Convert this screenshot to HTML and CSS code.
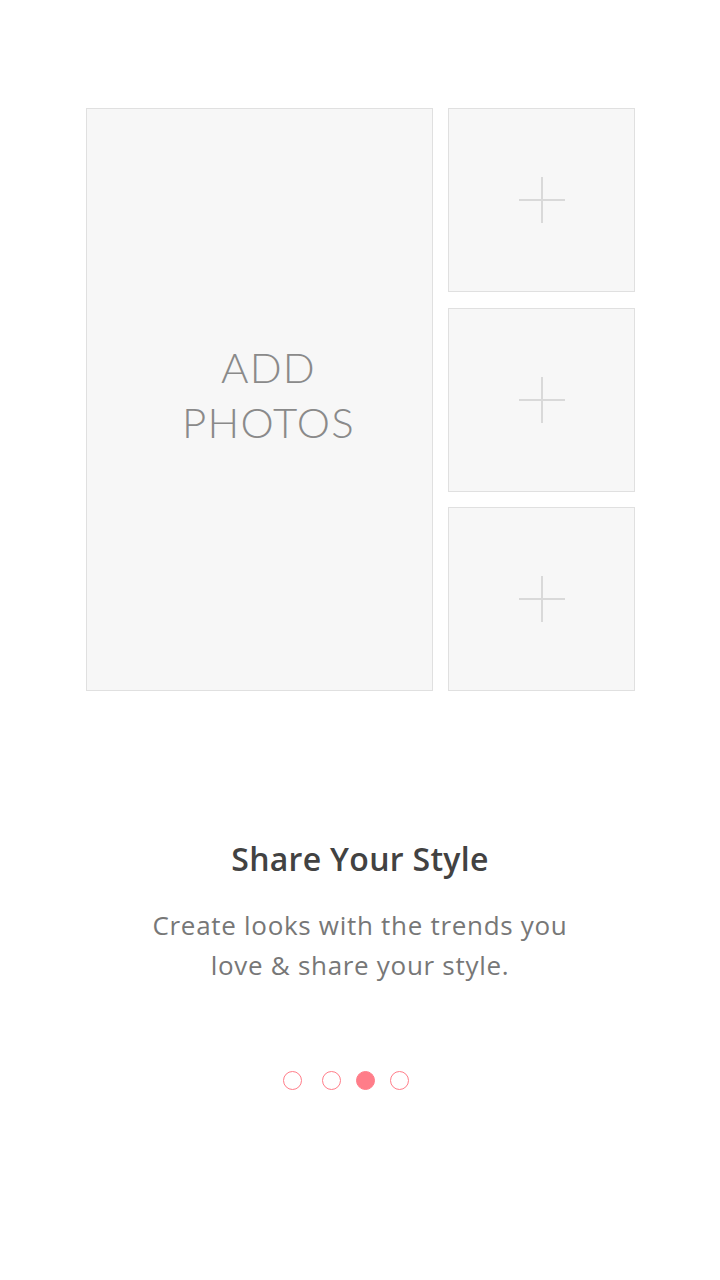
FILE: index.html
```html
<!DOCTYPE html>
<html lang="en">
<head>
<meta charset="utf-8">
<title>Share Your Style</title>
<link rel="stylesheet" href="styles.css">
</head>
<body>
<main class="screen">
  <section class="grid">
    <div class="tile tile-main">
      <span class="add-label">ADD<br>PHOTOS</span>
    </div>
    <div class="tile tile-small">
      <svg class="plus" viewBox="0 0 46 46" width="46" height="46"><path d="M23 0V46M0 23H46" stroke="#d9d9d9" stroke-width="2" fill="none"/></svg>
    </div>
    <div class="tile tile-small">
      <svg class="plus" viewBox="0 0 46 46" width="46" height="46"><path d="M23 0V46M0 23H46" stroke="#d9d9d9" stroke-width="2" fill="none"/></svg>
    </div>
    <div class="tile tile-small">
      <svg class="plus" viewBox="0 0 46 46" width="46" height="46"><path d="M23 0V46M0 23H46" stroke="#d9d9d9" stroke-width="2" fill="none"/></svg>
    </div>
  </section>
  <section class="intro">
    <h1 class="title">Share Your Style</h1>
    <p class="desc">Create looks with the trends you<br>love &amp; share your style.</p>
  </section>
  <nav class="dots">
    <span class="dot dot-first"></span>
    <span class="dot"></span>
    <span class="dot dot-active"></span>
    <span class="dot"></span>
  </nav>
</main>
</body>
</html>
```
FILE: styles.css
```css
html, body {
  margin: 0;
  padding: 0;
  background: #ffffff;
}
body {
  font-family: "Open Sans", "Lato", sans-serif;
}
.screen {
  width: 720px;
  height: 1280px;
  display: flex;
  flex-direction: column;
  align-items: center;
  padding-top: 108px;
  box-sizing: border-box;
}
.grid {
  display: grid;
  grid-template-columns: 347px 187px;
  grid-template-rows: 184px 184px 184px;
  column-gap: 15px;
  row-gap: 15.5px;
  margin-left: 1px;
}
.tile {
  box-sizing: border-box;
  background: #f7f7f7;
  border: 1px solid #e0e0e0;
  display: flex;
  align-items: center;
  justify-content: center;
}
.tile-main {
  grid-row: 1 / span 3;
  grid-column: 1;
}
.add-label {
  font-family: "Lato", sans-serif;
  font-weight: 300;
  font-size: 42px;
  line-height: 55px;
  letter-spacing: 1.2px;
  color: #8a8a8a;
  text-align: center;
  margin-left: 18px;
  margin-top: -10px;
}
.plus {
  display: block;
}
.intro {
  margin-top: 148px;
  text-align: center;
}
.title {
  margin: 0;
  font-weight: 600;
  font-size: 32px;
  line-height: 40px;
  letter-spacing: 0.3px;
  color: #424242;
}
.desc {
  margin: 26px 0 0;
  font-size: 26px;
  line-height: 40px;
  letter-spacing: 0.7px;
  color: #777777;
}
.dots {
  margin-top: 86px;
  display: flex;
  gap: 15px;
  margin-right: 28px;
}
.dot {
  width: 19px;
  height: 19px;
  box-sizing: border-box;
  border: 1.5px solid #ff7d89;
  border-radius: 50%;
}
.dot-first {
  margin-right: 5px;
}
.dot-active {
  background: #ff7d89;
}
```
